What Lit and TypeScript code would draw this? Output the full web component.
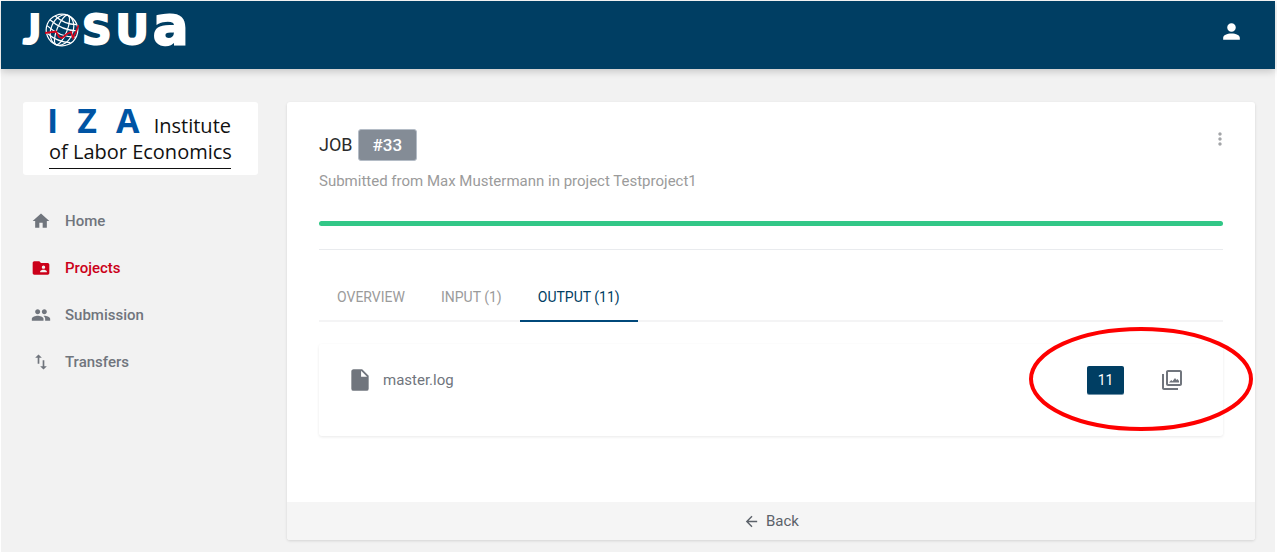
import { LitElement, html, css, svg } from "lit";
import { customElement, property, state } from "lit/decorators.js";
import { classMap } from "lit/directives/class-map.js";

const icons: Record<string, string> = {
  person:
    "M12 12.2c2.3 0 4.1-1.8 4.1-4.1S14.300 4 12 4 7.900 5.800 7.900 8.100s1.800 4.100 4.100 4.100zM12 13.800c-4.300 0-8 1.600-8 4.200v2h16v-2c0-2.600-3.700-4.200-8-4.200z",
  home: "M10 20v-6h4v6h5v-8h3L12 3 2 12h3v8z",
  folder:
    "M20 6h-8l-2-2H4c-1.100 0-2 .9-2 2v12c0 1.100.9 2 2 2h16c1.100 0 2-.9 2-2V8c0-1.100-.9-2-2-2zm-5 3c1.100 0 2 .9 2 2s-.9 2-2 2-2-.9-2-2 .9-2 2-2zm4 8h-8v-1c0-1.330 2.670-2 4-2s4 .67 4 2v1z",
  people:
    "M16 11c1.660 0 3-1.340 3-3s-1.340-3-3-3-3 1.340-3 3 1.340 3 3 3zm-8 0c1.660 0 3-1.340 3-3S9.660 5 8 5 5 6.340 5 8s1.340 3 3 3zm0 2c-2.330 0-7 1.170-7 3.500V19h14v-2.500c0-2.330-4.670-3.500-7-3.500zm8 0c-.29 0-.62.02-.97.05 1.160.84 1.970 1.970 1.970 3.450V19h6v-2.500c0-2.330-4.670-3.500-7-3.500z",
  transfer:
    "M9 3L5 7h3v7h2V7h3L9 3zm7 14v-7h-2v7h-3l4 4 4-4h-3z",
  more: "M12 8c1.100 0 2-.9 2-2s-.9-2-2-2-2 .9-2 2 .9 2 2 2zm0 2c-1.100 0-2 .9-2 2s.9 2 2 2 2-.9 2-2-.9-2-2-2zm0 6c-1.100 0-2 .9-2 2s.9 2 2 2 2-.9 2-2-.9-2-2-2z",
  file: "M13 9V3.500L18.500 9M6 2c-1.110 0-2 .89-2 2v16a2 2 0 0 0 2 2h12a2 2 0 0 0 2-2V8l-6-6H6z",
  gallery:
    "M20 4v12H8V4h12m0-2H8c-1.100 0-2 .9-2 2v12c0 1.100.9 2 2 2h12c1.100 0 2-.9 2-2V4c0-1.100-.9-2-2-2zM9 14.500l2.200-2.500 1.300 1.200 2.500-3.200 1.500 2 1-1 1.500 2v1.500zM2 6v14c0 1.100.9 2 2 2h14v-2H4V6H2z",
  back: "M20 11H7.830l5.590-5.590L12 4l-8 8 8 8 1.410-1.410L7.830 13H20v-2z",
};

@customElement("ui-icon")
class UiIcon extends LitElement {
  @property() name = "home";
  static styles = css`
    :host { display: block; width: 20px; height: 20px; flex: none; }
    svg { display: block; width: 100%; height: 100%; fill: currentColor; }
  `;
  render() {
    return html`<svg viewBox="0 0 24 24" aria-hidden="true">${svg`<path d=${icons[this.name]}></path>`}</svg>`;
  }
}

@customElement("josua-logo")
class JosuaLogo extends LitElement {
  static styles = css`
    :host { display: block; padding-bottom: 6px; }
    .mark { display: flex; align-items: baseline; color: #fff; line-height: 34px; }
    .j { width: 22px; font: 900 41px/34px Lato, sans-serif; -webkit-text-stroke: 2px #fff; }
    .letters { display: flex; align-items: baseline; gap: 4px; font: 700 41px/34px "DejaVu Sans", sans-serif; -webkit-text-stroke: 2px #fff; }
    .a { font-size: 53px; }
    .globe { width: 34px; height: 34px; align-self: flex-end; margin-right: 3px; }
    .grid { fill: none; stroke: #fff; stroke-width: 1.2; }
    .pulse { fill: none; stroke: #d2051e; stroke-width: 1.8; }
  `;
  render() {
    return html`<div class="mark">
      <span class="j">J</span>
      <svg class="globe" viewBox="0 0 34 34" role="img" aria-label="O">
        <g class="grid" transform="rotate(22 17 17)">
          <circle cx="17" cy="17" r="15.800"></circle>
          <ellipse cx="17" cy="17" rx="11" ry="15.800"></ellipse>
          <ellipse cx="17" cy="17" rx="5" ry="15.800"></ellipse>
          <path d="M5.500 6.500Q17 11 28.500 6.500M2 12Q17 17.500 32 12M1.500 18.500Q17 24.500 32.500 18.500M4.500 25.500Q17 30 29.500 25.500"></path>
        </g>
        <path class="pulse" d="M0 20l11-1.500 3 5.500 3 1 5-4 4-2 2 6 3-6 2.500-7"></path>
      </svg>
      <span class="letters"><span>S</span><span>U</span><span class="a">a</span></span>
    </div>`;
  }
}

@customElement("iza-logo")
class IzaLogo extends LitElement {
  static styles = css`
    :host { display: block; background: #fff; border-radius: 3px; padding: 2px 27px 6px 26px; font: 20px/20px "Open Sans", sans-serif; color: #111; }
    .top { display: flex; align-items: baseline; justify-content: space-between; }
    .big { display: flex; gap: 19px; margin-left: -2px; font-size: 34px; line-height: 32px; font-weight: 700; color: #0054a4; }
    .bottom { margin-top: 2px; line-height: 28px; padding-bottom: 2px; border-bottom: 1px solid #111; white-space: nowrap; }
  `;
  render() {
    return html`<div class="top">
        <span class="big"><span>I</span><span>Z</span><span>A</span></span>
        <span>Institute</span>
      </div>
      <div class="bottom">of Labor Economics</div>`;
  }
}

@customElement("app-root")
class AppRoot extends LitElement {
  @state() private tab = 2;

  private nav = [
    { label: "Home", icon: "home" },
    { label: "Projects", icon: "folder", active: true },
    { label: "Submission", icon: "people" },
    { label: "Transfers", icon: "transfer" },
  ];
  private tabs = ["OVERVIEW", "INPUT (1)", "OUTPUT (11)"];

  static styles = css`
    :host { display: block; min-height: 100vh; box-sizing: border-box; padding: 1px 2px 2px 1px; background: #fff; font: 15px/20px Roboto, sans-serif; color: #70757d; }
    * { box-sizing: border-box; }
    button { font: inherit; color: inherit; background: none; border: 0; padding: 0; margin: 0; cursor: pointer; }
    a { color: inherit; text-decoration: none; }
    .page { min-height: calc(100vh - 3px); background: #f2f2f2; }
    .bar { display: flex; align-items: center; justify-content: space-between; height: 68px; padding: 0 31px 8px 22px; background: #003e63; box-shadow: 0 2px 8px rgba(0, 0, 0, 0.2); color: #fff; }
    .user ui-icon { width: 25px; height: 25px; }
    .body { display: grid; grid-template-columns: 235px minmax(0, 1fr); gap: 29px; padding: 33px 20px 12px 22px; align-items: start; }
    .nav { display: flex; flex-direction: column; padding-top: 22px; font-weight: 500; }
    .item { display: flex; align-items: center; gap: 14px; height: 47px; padding-left: 8px; }
    .active { color: #cb0019; }
    .card { background: #fff; border-radius: 3px; box-shadow: 0 1px 3px rgba(0, 0, 0, 0.13); overflow: hidden; }
    .content { padding: 27px 32px 66px; }
    .head { display: flex; justify-content: space-between; align-items: flex-start; }
    .title { display: flex; align-items: center; gap: 5px; margin: 0; font-size: 18px; line-height: 32px; font-weight: 400; color: #2b2b2b; }
    .num { padding: 0 14px; border: 1px solid #b4bcc6; border-radius: 3px; background: #848c96; color: #fff; font-size: 17px; line-height: 30px; font-weight: 500; }
    .more { color: #a3a5a8; margin-right: -7px; }
    .sub { margin: 10px 0 0; color: #9b9b9b; }
    .progress { height: 5px; margin-top: 30px; border-radius: 3px; background: #32c787; }
    .tabs { display: flex; margin-top: 23px; padding-top: 24px; border-top: 1px solid #e9ebee; box-shadow: inset 0 -2px #f4f4f5; color: #9b9b9b; font-size: 14px; }
    .tab { height: 48px; padding: 0 18px; border-bottom: 2px solid transparent; }
    .on { color: #003e63; border-color: #00487a; }
    .row { position: relative; display: flex; align-items: center; margin-top: 22px; padding: 22px 39px 42px 28px; border-radius: 3px; box-shadow: 0 1px 3px rgba(0, 0, 0, 0.09); }
    .file { width: 26px; height: 26px; margin-right: 10px; }
    .name { flex: 1; }
    .count { width: 37px; height: 28px; margin-right: 36px; border-radius: 2px; background: #003e63; box-shadow: 0 1px #6f91a7; color: #fff; font-size: 14px; }
    .gallery ui-icon { width: 24px; height: 24px; }
    .mark { position: absolute; right: -30px; top: -18px; width: 224px; height: 106px; pointer-events: none; fill: none; stroke: #fe0000; stroke-width: 4; }
    .foot { display: flex; align-items: center; justify-content: center; gap: 6px; width: 100%; height: 38px; background: #f5f5f5; color: #5c626a; }
    .foot ui-icon { width: 17px; height: 17px; }
  `;

  render() {
    return html`<div class="page">
      <header class="bar">
        <josua-logo></josua-logo>
        <button class="user" aria-label="Account"><ui-icon name="person"></ui-icon></button>
      </header>
      <div class="body">
        <aside>
          <iza-logo></iza-logo>
          <nav class="nav">
            ${this.nav.map(
              (n) => html`<a href="#" class=${classMap({ item: true, active: !!n.active })}>
                <ui-icon name=${n.icon}></ui-icon><span>${n.label}</span>
              </a>`
            )}
          </nav>
        </aside>
        <main class="card">
          <div class="content">
            <div class="head">
              <h1 class="title"><span>JOB</span><span class="num">#33</span></h1>
              <button class="more" aria-label="More"><ui-icon name="more"></ui-icon></button>
            </div>
            <p class="sub">Submitted from Max Mustermann in project Testproject1</p>
            <div class="progress" role="progressbar" aria-label="Job progress" aria-valuenow="100"></div>
            <div class="tabs" role="tablist">
              ${this.tabs.map(
                (t, i) => html`<button role="tab" aria-selected=${i === this.tab}
                  class=${classMap({ tab: true, on: i === this.tab })}
                  @click=${() => (this.tab = i)}>${t}</button>`
              )}
            </div>
            <div class="row">
              <ui-icon class="file" name="file"></ui-icon>
              <span class="name">master.log</span>
              <button class="count">11</button>
              <button class="gallery" aria-label="Gallery"><ui-icon name="gallery"></ui-icon></button>
              <svg class="mark" viewBox="0 0 224 106" aria-hidden="true"><ellipse cx="112" cy="53" rx="110" ry="50"></ellipse></svg>
            </div>
          </div>
          <button class="foot"><ui-icon name="back"></ui-icon><span>Back</span></button>
        </main>
      </div>
    </div>`;
  }
}
